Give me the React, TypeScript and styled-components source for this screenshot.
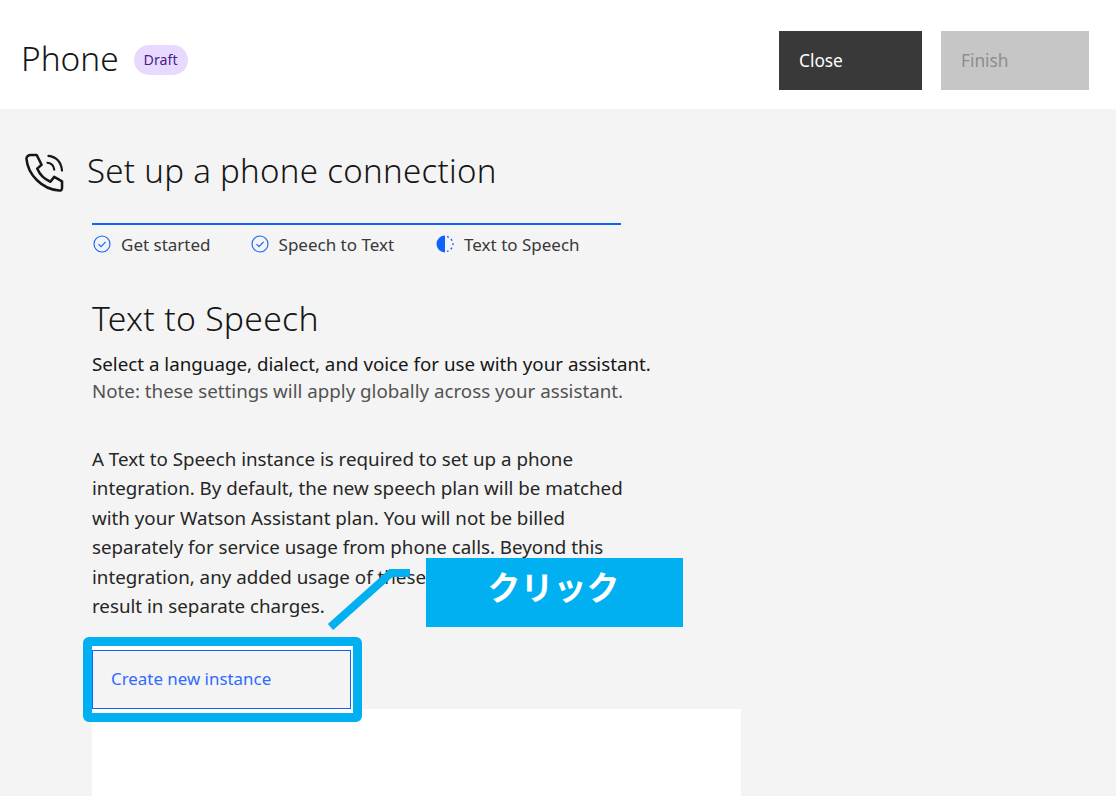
import { createGlobalStyle, styled } from 'styled-components'

const GlobalStyle = createGlobalStyle`
  html, body {
    margin: 0;
    padding: 0;
    background: #f4f4f4;
  }
  body {
    font-family: "Noto Sans", "Liberation Sans", sans-serif;
    color: #161616;
  }
`
const Page = styled.div`
  position: relative;
  width: 1116px;
  height: 796px;
  overflow: hidden;
  background: #f4f4f4;
`
const Header = styled.header`
  box-sizing: border-box;
  display: flex;
  align-items: flex-start;
  height: 109px;
  padding: 31px 27px 0 21px;
  background: #fff;
`
const PageTitle = styled.h1`
  margin: 5px 15px 0 0;
  font-size: 33.4px;
  line-height: 44px;
  font-weight: 300;
  color: #161616;
`
const Tag = styled.span`
  margin-top: 14px;
  padding: 0 10px;
  height: 30px;
  line-height: 30px;
  border-radius: 15px;
  background: #e8daff;
  color: #491d8b;
  font-size: 14.2px;
`
const Actions = styled.div`
  display: flex;
  gap: 19px;
  margin-left: auto;
`
const ActionButton = styled.button<{ $disabled?: boolean; $width: number }>`
  box-sizing: border-box;
  width: ${p => p.$width}px;
  height: 59px;
  padding: 0 20px 1px;
  border: none;
  text-align: left;
  font-family: inherit;
  font-size: 17.3px;
  background: ${p => (p.$disabled ? '#c6c6c6' : '#393939')};
  color: ${p => (p.$disabled ? '#8d8d8d' : '#fff')};
`
const Content = styled.main`
  padding: 43px 0 0 25px;
`
const SetupRow = styled.div`
  display: flex;
  align-items: center;
  gap: 23px;
  height: 40px;
`
const SetupTitle = styled.h2`
  margin: 0 0 2px;
  font-size: 33px;
  line-height: 40px;
  font-weight: 300;
  letter-spacing: 0.3px;
`
const Column = styled.div`
  width: 649px;
  margin: 31px 0 0 67px;
`
const Steps = styled.div`
  display: flex;
  gap: 39px;
  box-sizing: border-box;
  width: 529px;
  height: 42px;
  padding-top: 9px;
  border-top: 2px solid #0f62fe;
`
const Step = styled.div<{ $current?: boolean }>`
  display: flex;
  align-items: center;
  gap: 10px;
  margin-left: ${p => (p.$current ? '2px' : '0')};
  padding-left: 1px;
  height: 20px;
  font-size: 17px;
  color: #393939;
`
const Heading = styled.h3`
  margin: 31px 0 0;
  font-size: 33.7px;
  line-height: 44px;
  font-weight: 300;
  letter-spacing: 0.3px;
`
const Lead = styled.p`
  margin: 10px 0 0;
  font-size: 18.76px;
  line-height: 27px;
`
const Note = styled.span`
  color: #525252;
`
const Body = styled.p`
  margin: 40px 0 0;
  font-size: 18.76px;
  line-height: 29.4px;
  color: #262626;
`
const OutlineButton = styled.button`
  box-sizing: border-box;
  display: block;
  width: 259px;
  height: 59px;
  margin-top: 30px;
  padding: 0 18px 2px;
  border: 1.5px solid #0f62fe;
  background: transparent;
  text-align: left;
  font-family: inherit;
  font-size: 16.9px;
  color: #2f6bfe;
`
const WhitePanel = styled.div`
  height: 120px;
  background: #fff;
`
const Highlight = styled.div`
  position: absolute;
  left: 83px;
  top: 637px;
  box-sizing: border-box;
  width: 279px;
  height: 85px;
  border: 9px solid #00b0f0;
  border-radius: 6px;
`
const HighlightGap = styled.div`
  box-sizing: border-box;
  height: 100%;
  border-top: 4px solid #fff;
  border-right: 2px solid #fff;
  border-bottom: 4px solid #fff;
`
const Callout = styled.div`
  position: absolute;
  left: 426px;
  top: 558px;
  width: 255px;
  padding-right: 2px;
  height: 69px;
  background: #00b0f0;
  color: #fff;
  font-family: "Noto Sans CJK JP", sans-serif;
  font-size: 33px;
  font-weight: 700;
  line-height: 56px;
  text-align: center;
`
const Leader = styled.svg`
  position: absolute;
  left: 320px;
  top: 560px;
`

function PhoneIcon() {
  return (
    <svg width="39" height="39" viewBox="0 0 40 40" fill="none" stroke="#161616" strokeWidth="2.6" strokeLinejoin="round" strokeLinecap="round">
      <path d="M6 2 H12 L17 12 L12.5 16 C15 22 20 27 26 29.5 L30 24.5 L38 29 V36 C38 38 36.5 38.8 35 38.5 C17 37 3 22 1.5 6 C1.5 3.5 3.5 2 6 2 Z" />
      <path d="M23 10 C27 10.5 29.5 13 30 17" strokeWidth="2.2" />
      <path d="M24 3 C32 4 37 9.5 38 18" strokeWidth="2.2" />
    </svg>
  )
}

function CheckIcon() {
  return (
    <svg width="18" height="18" viewBox="0 0 18 18" fill="none" stroke="#0f62fe" strokeWidth="1.1">
      <circle cx="9" cy="9" r="8" />
      <path d="M5.5 9.2 L8 11.6 L12.6 6.8" />
    </svg>
  )
}

function HalfIcon() {
  return (
    <svg width="18" height="18" viewBox="0 0 18 18" fill="none">
      <path d="M9 0.5 A8.5 8.5 0 0 0 9 17.5 Z" fill="#0f62fe" />
      <path d="M11 1.6 A8 8 0 0 1 17 9 A8 8 0 0 1 11 16.4" stroke="#0f62fe" strokeWidth="1.3" strokeDasharray="2 2.6" />
    </svg>
  )
}

export default function App() {
  return (
    <Page>
      <GlobalStyle />
      <Header>
        <PageTitle>Phone</PageTitle>
        <Tag>Draft</Tag>
        <Actions>
          <ActionButton $width={143}>Close</ActionButton>
          <ActionButton $width={148} $disabled>Finish</ActionButton>
        </Actions>
      </Header>
      <Content>
        <SetupRow>
          <PhoneIcon />
          <SetupTitle>Set up a phone connection</SetupTitle>
        </SetupRow>
        <Column>
          <Steps>
            <Step><CheckIcon />Get started</Step>
            <Step><CheckIcon />Speech to Text</Step>
            <Step $current><HalfIcon />Text to Speech</Step>
          </Steps>
          <Heading>Text to Speech</Heading>
          <Lead>
            Select a language, dialect, and voice for use with your assistant.<br />
            <Note>Note: these settings will apply globally across your assistant.</Note>
          </Lead>
          <Body>
            A Text to Speech instance is required to set up a phone<br />
            integration. By default, the new speech plan will be matched<br />
            with your Watson Assistant plan. You will not be billed<br />
            separately for service usage from phone calls. Beyond this<br />
            integration, any added usage of these<br />
            result in separate charges.
          </Body>
          <OutlineButton>Create new instance</OutlineButton>
          <WhitePanel />
        </Column>
      </Content>
      <Highlight><HighlightGap /></Highlight>
      <Leader width="100" height="75" viewBox="0 0 100 75" fill="none">
        <path d="M10.5 67 L71 13 H90" stroke="#00b0f0" strokeWidth="8" />
      </Leader>
      <Callout>クリック</Callout>
    </Page>
  )
}
